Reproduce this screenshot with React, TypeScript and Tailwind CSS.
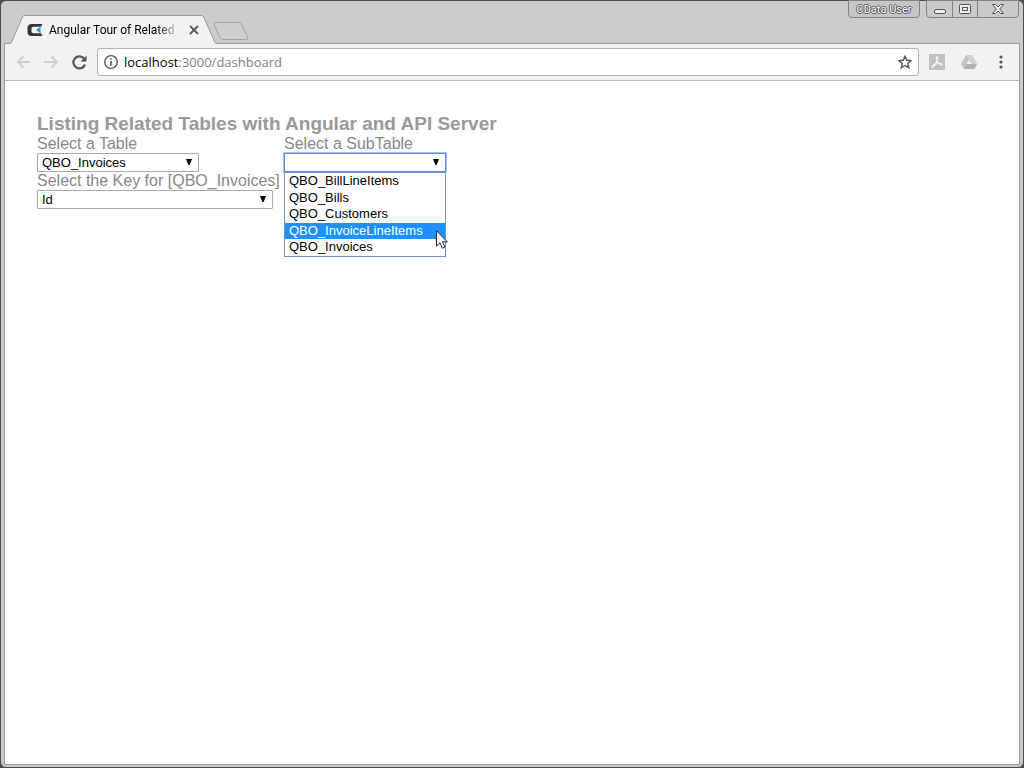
import React, { useState } from 'react';

interface SelectBoxProps {
  id: string;
  label: string;
  value: string;
  options: string[];
  className: string;
  focused?: boolean;
  onChange: (value: string) => void;
}

const tables = ['QBO_BillLineItems', 'QBO_Bills', 'QBO_Customers', 'QBO_InvoiceLineItems', 'QBO_Invoices'];

const SelectBox: React.FC<SelectBoxProps> = ({ id, label, value, options, className, focused, onChange }) => (
  <div>
    <label htmlFor={id} className="block h-[18px] text-base leading-[18px] whitespace-nowrap text-[#888888]">
      {label}
    </label>
    <div className={`relative h-[19px] ${className}`}>
      <select
        id={id}
        value={value}
        onChange={(e) => onChange(e.target.value)}
        className={`block h-full w-full appearance-none border bg-white pl-1 pr-5 text-[13px] leading-4 text-black outline-none ${focused ? 'border-[#5b8ad6] ring-1 ring-[#a9c3ec]' : 'rounded-[1px] border-[#a9a9a9]'}`}
      >
        {options.map((option) => (
          <option key={option} value={option}>{option}</option>
        ))}
      </select>
      <svg viewBox="0 0 6 6" className="pointer-events-none absolute top-[6px] right-[7px] h-[6px] w-[6px]" aria-hidden="true">
        <path d="M0 0H6L3.600 6H2.400Z" fill="#000" />
      </svg>
    </div>
  </div>
);

const Pointer: React.FC = () => (
  <svg viewBox="0 0 12 19" className="pointer-events-none absolute top-[58px] -right-[2px] h-[19px] w-3" aria-hidden="true">
    <path d="M.5 .7V16.2L4 12.8L6.3 18.2L8.8 17.1L6.5 11.8H11.3Z" fill="#fff" stroke="#20202c" strokeWidth="1" />
  </svg>
);

const TabStrip: React.FC = () => (
  <div className="flex h-[42px] shrink-0 items-end">
    {/* Active tab */}
    <div className="relative z-10 -mb-px h-[29px] w-[213px]">
      <svg viewBox="0 0 213 29" className="absolute inset-0 h-full w-full" aria-hidden="true">
        <path d="M1 28.500H5.500Q7 28.500 7.500 27.500L18.500 2Q19 .5 20.500 .5H197Q199 .5 199.700 2L211 27.500Q211.500 28.500 213 28.500V29H1Z" fill="#f2f2f2" />
        <path d="M1 28.500H5.500Q7 28.500 7.500 27.500L18.500 2Q19 .5 20.500 .5H197Q199 .5 199.700 2L211 27.500Q211.500 28.500 213 28.500" fill="none" stroke="#999" />
      </svg>
      <div className="relative flex h-full items-center pr-[18px] pl-[23px]">
        <svg viewBox="0 0 16 14" className="h-[14px] w-4 shrink-0" aria-hidden="true">
          <path d="M15.500 1H5Q.5 1 .5 5V9Q.5 13 5 13H15.500L14 10.300H6.500Q4.500 10.300 4.500 8.500V5.500Q4.500 3.700 6.500 3.700H14Z" fill="#34383c" />
          <path d="M9 7L13.500 3.700V10.300Z" fill="#159be8" />
        </svg>
        <span className="ml-[6px] bg-linear-to-r from-black from-80% to-transparent to-97% bg-clip-text font-[Roboto,sans-serif] text-xs whitespace-nowrap text-transparent">
          Angular Tour of Related T
        </span>
        <button type="button" aria-label="Close tab" className="ml-auto">
          <svg viewBox="0 0 10 10" className="h-[10px] w-[10px]" stroke="#5a5a5a" strokeWidth="1.800">
            <path d="M1 1L9 9M9 1L1 9" />
          </svg>
        </button>
      </div>
    </div>
    <button type="button" aria-label="New tab" className="mb-[3px] ml-[-4px]">
      <svg viewBox="0 0 36 18" className="h-[18px] w-9" aria-hidden="true">
        <path d="M3 .5H25Q27.500 .5 28.500 2.500L34.500 15Q35.500 17.500 33 17.500H10Q8 17.500 7 15.500L1.200 3Q.4 .5 3 .5Z" fill="#cfcfcf" stroke="#a3a3a3" />
      </svg>
    </button>

    {/* User badge and window buttons */}
    <div className="mr-px ml-auto flex items-start self-start">
      <button type="button" className="-mt-px mr-[6px] h-[18px] w-[72px] rounded-b border border-[#828282] bg-[#c6c6c6] font-[Roboto,sans-serif] text-[11px] leading-[17px] whitespace-nowrap text-white [text-shadow:1px_0_#555,-1px_0_#555,0_1px_#555,0_-1px_#555]">
        CData User
      </button>
      <div className="-mt-px flex h-[18px] w-[93px] divide-x divide-[#828282] overflow-hidden rounded-b border border-[#828282] bg-[#cacaca]">
        <button type="button" aria-label="Minimize" className="flex w-[26px] items-center justify-center">
          <svg viewBox="0 0 12 12" className="h-3 w-3"><rect x=".5" y="6.500" width="11" height="4" rx="1.500" fill="#eee" stroke="#555" /></svg>
        </button>
        <button type="button" aria-label="Maximize" className="flex w-[25px] items-center justify-center">
          <svg viewBox="0 0 12 10" className="h-[10px] w-3" fill="#eee" stroke="#555">
            <rect x=".5" y=".5" width="11" height="9" rx="1" /><rect x="3.500" y="3.500" width="5" height="3" />
          </svg>
        </button>
        <button type="button" aria-label="Close" className="flex flex-1 items-center justify-center">
          <svg viewBox="0 0 12 10" className="h-[10px] w-3">
            <path d="M.5 .5H3.500L6 3L8.500 .5H11.500L7.700 5L11.500 9.500H8.500L6 7L3.500 9.500H.5L4.300 5Z" fill="#eee" stroke="#555" />
          </svg>
        </button>
      </div>
    </div>
  </div>
);

const Toolbar: React.FC = () => (
  <div className="flex h-[38px] shrink-0 items-center border-y border-t-[#999999] border-b-[#b6b6b6] bg-[#f2f2f2] pr-4 pl-[11px]">
    <button type="button" aria-label="Back" className="mr-[13px]">
      <svg viewBox="0 0 15 14" className="h-[14px] w-[15px]" fill="none" stroke="#cfcfcf" strokeWidth="1.800"><path d="M14 7H2M7.500 1.500L2 7L7.500 12.500" /></svg>
    </button>
    <button type="button" aria-label="Forward" className="mr-[13px]">
      <svg viewBox="0 0 15 14" className="h-[14px] w-[15px]" fill="none" stroke="#cfcfcf" strokeWidth="1.800"><path d="M0 7H13M7.500 1.500L13 7L7.500 12.500" /></svg>
    </button>
    <button type="button" aria-label="Reload" className="mr-[10px]">
      <svg viewBox="0 0 15 15" className="h-[15px] w-[15px]">
        <path d="M12.300 4A6 6 0 1 0 13 9.500" fill="none" stroke="#555" strokeWidth="2.200" />
        <path d="M14.500 .5V6.500H8.500Z" fill="#555" />
      </svg>
    </button>
    <div className="flex h-7 min-w-0 flex-1 items-center rounded-[3px] border border-[#b4b4b4] bg-white px-[6px]">
      <svg viewBox="0 0 14 14" className="h-[14px] w-[14px] shrink-0" aria-hidden="true">
        <circle cx="7" cy="7" r="6.300" fill="none" stroke="#555" strokeWidth="1.300" />
        <path d="M6.200 3.200H7.800V4.800H6.200ZM6.200 6H7.800V10.800H6.200Z" fill="#555" />
      </svg>
      <p className="ml-[6px] font-['Open_Sans',sans-serif] text-[13px] leading-5 text-[#808080]">
        <span className="text-black">localhost</span>:3000/dashboard
      </p>
      <button type="button" aria-label="Bookmark this page" className="ml-auto">
        <svg viewBox="0 0 14 14" className="h-[14px] w-[14px]">
          <path d="M7 1.200L8.700 5.300L13.100 5.600L9.700 8.500L10.800 12.800L7 10.500L3.200 12.800L4.300 8.500L.9 5.600L5.300 5.300Z" fill="none" stroke="#555" strokeWidth="1.400" />
        </svg>
      </button>
    </div>
    <button type="button" aria-label="Adobe Acrobat" className="ml-[10px]">
      <svg viewBox="0 0 16 16" className="h-4 w-4">
        <path d="M0 0H16V16H0Z" fill="#c1c1c1" />
        <path d="M7.500 3C8.500 2.200 9 3.500 8.200 6C7.300 9 5 13 3.500 13.200C2.200 13 4 10.600 7.500 9.800C11 9 13.700 9.500 13 10.800C12 12 8.500 8.800 7.700 6C7.200 4.500 7 3.300 7.500 3Z" fill="none" stroke="#f5f5f5" strokeWidth="1.100" />
      </svg>
    </button>
    <button type="button" aria-label="Google Drive" className="ml-4">
      <svg viewBox="0 0 16 14" className="h-[14px] w-4">
        <path d="M5 0H11L16 9L13.300 14H2.700L0 9Z" fill="#c4c4c4" />
        <path d="M5 0H11L16 9H10.500Z" fill="#d2d2d2" />
        <path d="M5.500 9H16L13.300 14H2.700Z" fill="#b2b2b2" />
        <path d="M8 5L10.300 9H5.700Z" fill="#f7f7f7" />
      </svg>
    </button>
    <button type="button" aria-label="Menu" className="ml-[22px]">
      <svg viewBox="0 0 4 14" className="h-[14px] w-1" fill="#555">
        <circle cx="2" cy="2" r="1.600" /><circle cx="2" cy="7" r="1.600" /><circle cx="2" cy="12" r="1.600" />
      </svg>
    </button>
  </div>
);

const Dashboard: React.FC = () => {
  const [table, setTable] = useState('QBO_Invoices');
  const [key, setKey] = useState('Id');
  const [subTable, setSubTable] = useState('');
  const [active, setActive] = useState('QBO_InvoiceLineItems');

  return (
    <main className="flex-1 bg-white px-8 pt-8 font-['Liberation_Sans',Arial,sans-serif]">
      <h1 className="text-[19px] leading-[22px] font-bold text-[#999999]">
        Listing Related Tables with Angular and API Server
      </h1>
      <div className="flex items-start">
        <div className="w-[247px]">
          <SelectBox id="table" label="Select a Table" value={table} options={tables} className="w-[162px]" onChange={setTable} />
          <SelectBox id="key" label={`Select the Key for [${table}]`} value={key} options={['Id']} className="w-[236px]" onChange={setKey} />
        </div>
        <div className="relative">
          <SelectBox id="subtable" label="Select a SubTable" value={subTable} options={['', ...tables]} className="w-[162px]" focused onChange={setSubTable} />
          {/* Open option list */}
          <div className="absolute top-full left-0 w-[162px]">
            <ul role="listbox" aria-label="Select a SubTable" className="flex h-[85px] flex-col justify-between border border-[#7394c9] bg-white pb-px text-[13px]">
              {tables.map((name) => (
                <li
                  key={name}
                  role="option"
                  aria-selected={name === active}
                  onMouseEnter={() => setActive(name)}
                  onClick={() => setSubTable(name)}
                  className={`px-1 leading-4 ${name === active ? 'bg-[#1e90ff] text-white' : 'text-black'}`}
                >
                  {name}
                </li>
              ))}
            </ul>
            <Pointer />
          </div>
        </div>
      </div>
    </main>
  );
};

const App: React.FC = () => (
  <div className="min-h-screen bg-[#4d4d4d]">
    <div className="flex min-h-screen flex-col rounded-md border border-[#4d4d4d] bg-[#cccccc] px-[3px] pb-[2px]">
      <TabStrip />
      <div className="flex flex-1 flex-col border-x border-b border-[#999999]">
        <Toolbar />
        <Dashboard />
      </div>
    </div>
  </div>
);

export default App;
